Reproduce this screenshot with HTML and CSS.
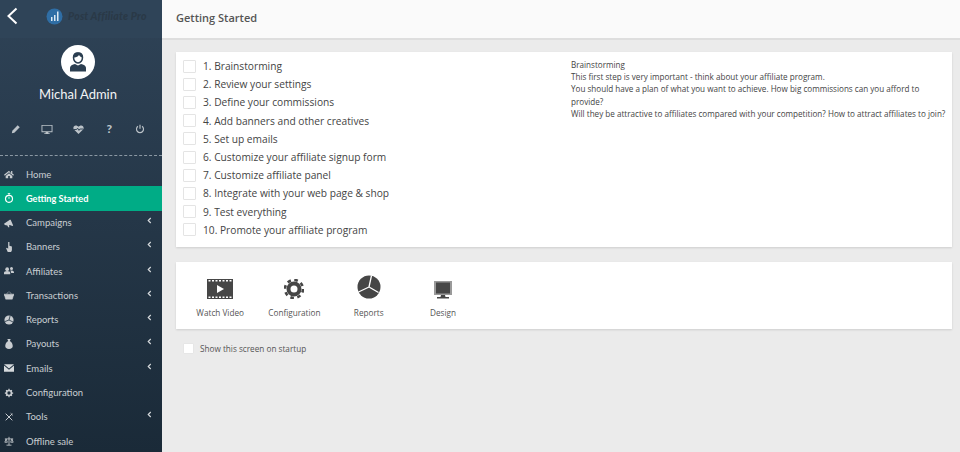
FILE: index.html
```html
<!DOCTYPE html>
<html lang="en">
  <head>
    <meta charset="UTF-8" />
    <title>Getting Started</title>
    <link rel="stylesheet" href="styles.css">
  </head>
  <body>
    <aside class="sidebar">
      <div class="logo-bar">
        <svg class="back" width="12" height="18" viewBox="0 0 12 18"><path d="M10.5 1.5 2.5 9l8 7.5" fill="none" stroke="#fff" stroke-width="2"/></svg>
        <div class="logo">
          <svg width="17" height="17" viewBox="0 0 17 17">
            <circle cx="8.5" cy="8.5" r="8" fill="#2f6ea5"/>
            <path d="M5 9h1.500v4H5zM8 7h1.500v6H8zM11 3.500h1.500V13H11z" fill="#dbe8f2"/>
          </svg>
          <span class="logo-text">Post Affiliate Pro</span>
        </div>
      </div>
      <div class="profile">
        <div class="avatar">
          <svg width="18" height="20" viewBox="0 0 18 20">
            <path d="M9 1c2.800 0 4.500 2 4.500 4.600S11.700 11 9 11 4.500 8.200 4.500 5.600 6.200 1 9 1z" fill="none" stroke="#2b3e50" stroke-width="1.500"/>
            <path d="M4.500 5.500C6 5.500 9 5 10 3c1 1.500 2 2.300 3.500 2.500C13.500 2.500 11.800.5 9 .5S4.500 2.500 4.500 5.500z" fill="#2b3e50"/>
            <path d="M1 19.500v-3.800c0-2 2.500-3 5-3.700l3 1.500 3-1.500c2.500.7 5 1.700 5 3.700v3.800z" fill="#2b3e50"/>
          </svg>
        </div>
        <div class="profile-name">Michal Admin</div>
        <div class="profile-tools">
          <svg width="10" height="10" viewBox="0 0 12 12"><path d="M1 11l.6-3L8 1.500 10.500 4 4 10.400z" fill="#bcc3c9"/></svg>
          <svg width="12" height="11" viewBox="0 0 12 12"><path d="M0 1h12v8H7.500v1.200H9v.8H3v-.8h1.500V9H0zm1 1v6h10V2z" fill="#bcc3c9"/></svg>
          <svg width="11" height="11" viewBox="0 0 12 12"><path d="M6 11 1 6C-.500 4 1 1.500 3 1.500c1.300 0 2.300.7 3 1.500.7-.8 1.700-1.500 3-1.500 2 0 3.500 2.500 2 4.500z" fill="#bcc3c9"/><path d="M1 6h3l1-1.500L6.500 7 7.500 5.500H11" fill="none" stroke="#2b3e50"/></svg>
          <span class="tool-q">?</span>
          <svg width="10" height="10" viewBox="0 0 12 12"><path d="M3.500 2.800a4.200 4.200 0 1 0 5 0M6 .8v5" fill="none" stroke="#bcc3c9" stroke-width="1.400"/></svg>
        </div>
      </div>
      <nav class="menu">
        <a class="menu-item">
          <svg class="menu-icon" viewBox="0 0 12 12"><path d="M6 2 0 7l1 1 5-4 5 4 1-1-2-1.700V2.500H8.500v2.500zM2 8.300 6 5l4 3.300V11H7V8.500H5V11H2z" fill="#c8ccd0"/></svg>
          <span>Home</span>
        </a>
        <a class="menu-item active">
          <svg class="menu-icon" viewBox="0 0 12 12"><path d="M4.500.5h3M6 .5v2" stroke="#fff" fill="none"/><circle cx="6" cy="7" r="4.200" fill="none" stroke="#fff" stroke-width="1.400"/><path d="M6 7V4.500" stroke="#fff"/></svg>
          <span>Getting Started</span>
        </a>
        <a class="menu-item">
          <svg class="menu-icon" viewBox="0 0 12 12"><path d="M0 7l7-5 1 0 3 7-1 .5-3-1-1 .5 .5 2H5L4 9 1 8.500z" fill="#c8ccd0"/></svg>
          <span>Campaigns</span>
          <svg class="menu-arrow" viewBox="0 0 6 8"><path d="M4.500 1 1.500 4l3 3" fill="none" stroke="#d5d9dc" stroke-width="1.400"/></svg>
        </a>
        <a class="menu-item">
          <svg class="menu-icon" viewBox="0 0 12 12"><path d="M5 0h1.500v4.500l3 1V10L8.500 12h-4L2.500 7.500l1-.5L5 8z" fill="#c8ccd0"/></svg>
          <span>Banners</span>
          <svg class="menu-arrow" viewBox="0 0 6 8"><path d="M4.500 1 1.500 4l3 3" fill="none" stroke="#d5d9dc" stroke-width="1.400"/></svg>
        </a>
        <a class="menu-item">
          <svg class="menu-icon" viewBox="0 0 12 12"><circle cx="3.800" cy="3.800" r="2.200" fill="#c8ccd0"/><circle cx="9" cy="3" r="1.800" fill="#c8ccd0"/><path d="M0 10V8c0-1 1.500-2 3.800-2s3.700 1 3.700 2v2zM8 5.500c2 0 4 .5 4 2v1H8.500C8.500 7 8 6 7.500 5.500z" fill="#c8ccd0"/></svg>
          <span>Affiliates</span>
          <svg class="menu-arrow" viewBox="0 0 6 8"><path d="M4.500 1 1.500 4l3 3" fill="none" stroke="#d5d9dc" stroke-width="1.400"/></svg>
        </a>
        <a class="menu-item">
          <svg class="menu-icon" viewBox="0 0 12 12"><path d="M0 5h12v1.500h-.7L10 11H2L.7 6.500H0zM3 5l2.500-3M9 5 6.500 2" fill="#c8ccd0" stroke="#c8ccd0" stroke-width=".6"/></svg>
          <span>Transactions</span>
          <svg class="menu-arrow" viewBox="0 0 6 8"><path d="M4.500 1 1.500 4l3 3" fill="none" stroke="#d5d9dc" stroke-width="1.400"/></svg>
        </a>
        <a class="menu-item">
          <svg class="menu-icon" viewBox="0 0 12 12"><circle cx="6" cy="6" r="5.500" fill="#c8ccd0"/><path d="M6 6 7.500.5M6 6 .8 8M6 6l5 2.500" stroke="#263847" fill="none"/></svg>
          <span>Reports</span>
          <svg class="menu-arrow" viewBox="0 0 6 8"><path d="M4.500 1 1.500 4l3 3" fill="none" stroke="#d5d9dc" stroke-width="1.400"/></svg>
        </a>
        <a class="menu-item">
          <svg class="menu-icon" viewBox="0 0 12 12"><path d="M4 0h4L7 2.500c2.500 1 3.500 4 3.500 6 0 2-1.500 3.500-4.500 3.500S1.500 10.500 1.500 8.500c0-2 1-5 3.500-6z" fill="#c8ccd0"/></svg>
          <span>Payouts</span>
          <svg class="menu-arrow" viewBox="0 0 6 8"><path d="M4.500 1 1.500 4l3 3" fill="none" stroke="#d5d9dc" stroke-width="1.400"/></svg>
        </a>
        <a class="menu-item">
          <svg class="menu-icon wide" viewBox="0 0 12 9"><path d="M0 0h12L6 5zM0 1.500v7.500h12V1.500L6 6.500z" fill="#d5d9dc"/></svg>
          <span>Emails</span>
          <svg class="menu-arrow" viewBox="0 0 6 8"><path d="M4.500 1 1.500 4l3 3" fill="none" stroke="#d5d9dc" stroke-width="1.400"/></svg>
        </a>
        <a class="menu-item">
          <svg class="menu-icon" viewBox="0 0 12 12"><circle cx="6" cy="6" r="3" fill="none" stroke="#c8ccd0" stroke-width="2"/><path d="M6 1v10M1 6h10M2.500 2.500l7 7M9.500 2.500l-7 7" stroke="#c8ccd0" stroke-width="1.500" stroke-dasharray="1.500 7 1.500"/></svg>
          <span>Configuration</span>
        </a>
        <a class="menu-item">
          <svg class="menu-icon" viewBox="0 0 12 12"><path d="M2 2l8 8M10 2l-8 8M8 1.500l2.500 2.500" stroke="#c8ccd0" stroke-width="1.200" fill="none"/></svg>
          <span>Tools</span>
          <svg class="menu-arrow" viewBox="0 0 6 8"><path d="M4.500 1 1.500 4l3 3" fill="none" stroke="#d5d9dc" stroke-width="1.400"/></svg>
        </a>
        <a class="menu-item">
          <svg class="menu-icon" viewBox="0 0 12 12"><path d="M6 1v10M3 11h6M1 3.500h10M2.500 3.500 1 7.500h3zM9.500 3.500 8 7.500h3z" stroke="#c8ccd0" fill="none"/></svg>
          <span>Offline sale</span>
        </a>
      </nav>
    </aside>
    <main class="content">
      <header class="page-head">Getting Started</header>
      <div class="page-body">
        <section class="card steps-card">
          <ul class="steps">
            <li><i class="check"></i>1. Brainstorming</li>
            <li><i class="check"></i>2. Review your settings</li>
            <li><i class="check"></i>3. Define your commissions</li>
            <li><i class="check"></i>4. Add banners and other creatives</li>
            <li><i class="check"></i>5. Set up emails</li>
            <li><i class="check"></i>6. Customize your affiliate signup form</li>
            <li><i class="check"></i>7. Customize affiliate panel</li>
            <li><i class="check"></i>8. Integrate with your web page &amp; shop</li>
            <li><i class="check"></i>9. Test everything</li>
            <li><i class="check"></i>10. Promote your affiliate program</li>
          </ul>
          <div class="step-info">
            Brainstorming<br>
            This first step is very important - think about your affiliate program.<br>
            You should have a plan of what you want to achieve. How big commissions can you afford to provide?<br>
            Will they be attractive to affiliates compared with your competition? How to attract affiliates to join?
          </div>
        </section>
        <section class="card links-card">
          <a class="link-item">
            <svg width="26" height="20" viewBox="0 0 26 20"><path fill-rule="evenodd" d="M0 0h26v20H0zM1.500 1v1.500h2V1zM5 1v1.500h2V1zM8.500 1v1.500h2V1zM12 1v1.500h2V1zM15.500 1v1.500h2V1zM19 1v1.500h2V1zM22.500 1v1.500h2V1zM1.500 17.500V19h2v-1.500zM5 17.500V19h2v-1.500zM8.500 17.500V19h2v-1.500zM12 17.500V19h2v-1.500zM15.500 17.500V19h2v-1.500zM19 17.500V19h2v-1.500zM22.500 17.500V19h2v-1.500zM10 6v8l7-4z" fill="#464646"/></svg>
            <span>Watch Video</span>
          </a>
          <a class="link-item">
            <svg width="20" height="20" viewBox="0 0 20 20"><circle cx="10" cy="10" r="5.500" fill="none" stroke="#464646" stroke-width="4"/><circle cx="10" cy="10" r="9" fill="none" stroke="#464646" stroke-width="2.600" stroke-dasharray="3.600 3.470"/></svg>
            <span>Configuration</span>
          </a>
          <a class="link-item">
            <svg width="24" height="24" viewBox="0 0 24 24"><circle cx="12" cy="12" r="11.500" fill="#464646"/><path d="M12 12 14.500 .5M12 12 1.500 17M12 12l9.500 5.500" stroke="#fff" stroke-width="1.300" fill="none"/></svg>
            <span>Reports</span>
          </a>
          <a class="link-item">
            <svg width="18" height="18" viewBox="0 0 18 18"><path d="M0 0h18v14H0z" fill="#9a9a9a"/><path d="M2 1.500h14v11H2z" fill="#464646"/><path d="M7 14h4l.5 2H15v1.500H3V16h3.500z" fill="#464646"/></svg>
            <span>Design</span>
          </a>
        </section>
        <label class="startup"><i class="check small"></i>Show this screen on startup</label>
      </div>
    </main>
  </body>
</html>
```

FILE: styles.css
```css
html,
body {
  margin: 0;
  padding: 0;
  height: 452px;
  overflow: hidden;
}
body {
  display: flex;
  font-family: "Open Sans", "Liberation Sans", sans-serif;
  background-color: #ebebeb;
  color: #444;
}

/* sidebar */
.sidebar {
  flex: 0 0 162px;
  width: 162px;
  height: 452px;
  overflow: hidden;
  background: linear-gradient(#2f4357, #1a2a38);
  font-family: Lato, "Open Sans", sans-serif;
}
.logo-bar {
  display: flex;
  align-items: center;
  height: 38px;
  padding-left: 6px;
  box-sizing: border-box;
  background-color: #2f4458;
}
.back {
  margin-top: -6px;
}
.logo {
  display: flex;
  align-items: center;
  gap: 5px;
  margin-left: 28px;
  margin-top: -6px;
}
.logo-text {
  font-size: 10.500px;
  font-weight: 900;
  font-style: italic;
  letter-spacing: 0.2px;
  color: #2a3947;
}
.profile {
  display: flex;
  flex-direction: column;
  align-items: center;
  height: 118px;
  box-sizing: border-box;
  margin-bottom: 6px;
  padding-top: 7px;
  padding-right: 6px;
  border-bottom: 1px dashed #8b98a3;
}
.avatar {
  display: flex;
  align-items: center;
  justify-content: center;
  width: 34px;
  height: 34px;
  border-radius: 50%;
  background-color: #fff;
}
.profile-name {
  margin-top: 6px;
  font-size: 13px;
  line-height: 18px;
  color: #f2f4f5;
}
.profile-tools {
  display: flex;
  justify-content: space-between;
  align-items: center;
  width: 134px;
  margin-top: 20px;
}
.tool-q {
  width: 12px;
  text-align: center;
  font-size: 12px;
  line-height: 12px;
  font-weight: 900;
  color: #bcc3c9;
}
.menu-item {
  display: flex;
  align-items: center;
  height: 24.270px;
  padding-left: 4px;
  font-size: 9.500px;
  color: #c9ced2;
}
.menu-item > span {
  margin-left: 12px;
}
.menu-item.active {
  background-color: #00ac86;
  color: #fff;
  font-size: 9.200px;
  font-weight: 700;
}
.menu-icon {
  flex: 0 0 10px;
  width: 10px;
  height: 10px;
}
.menu-icon.wide {
  height: 8px;
}
.menu-arrow {
  width: 5px;
  height: 7px;
  margin-left: auto;
  margin-right: 10px;
  margin-top: -4px;
}

/* content */
.content {
  flex: 1;
  min-width: 0;
}
.page-head {
  height: 40px;
  padding-left: 14px;
  box-sizing: border-box;
  line-height: 36px;
  font-size: 11px;
  font-weight: 600;
  color: #555;
  background-color: #fafafa;
  border-bottom: 2px solid #dedede;
}
.page-body {
  padding: 12px 8px 0 14px;
}
.card {
  background-color: #fff;
  box-shadow: 0 1px 2px rgba(0, 0, 0, 0.12);
}
.steps-card {
  display: flex;
  height: 195px;
  margin-bottom: 15px;
}
.steps {
  flex: 0 0 389px;
  margin: 0;
  padding: 5px 0 0 7px;
  box-sizing: border-box;
  list-style: none;
}
.steps li {
  display: flex;
  align-items: center;
  height: 18.200px;
  font-size: 10.200px;
  color: #444;
}
.check {
  flex: none;
  width: 11px;
  height: 11px;
  margin-right: 7px;
  background-color: #fff;
  border: 1px solid #e4e4e4;
  border-radius: 1px;
}
.step-info {
  flex: 1;
  padding: 7px 6px 0 6px;
  font-size: 8.120px;
  line-height: 12.200px;
  color: #444;
}
.links-card {
  display: flex;
  height: 67px;
  padding-left: 7px;
}
.link-item {
  display: flex;
  flex-direction: column;
  align-items: center;
  justify-content: flex-end;
  width: 74.300px;
  padding-bottom: 11px;
  box-sizing: border-box;
  font-size: 8.200px;
  color: #555;
}
.link-item > svg {
  margin-bottom: 8px;
}
.startup {
  display: flex;
  align-items: center;
  margin-top: 14px;
  padding-left: 7px;
  font-size: 8.200px;
  color: #555;
}
.check.small {
  width: 9px;
  height: 9px;
  margin-right: 6px;
  border-color: #e6e6e6;
}
```
